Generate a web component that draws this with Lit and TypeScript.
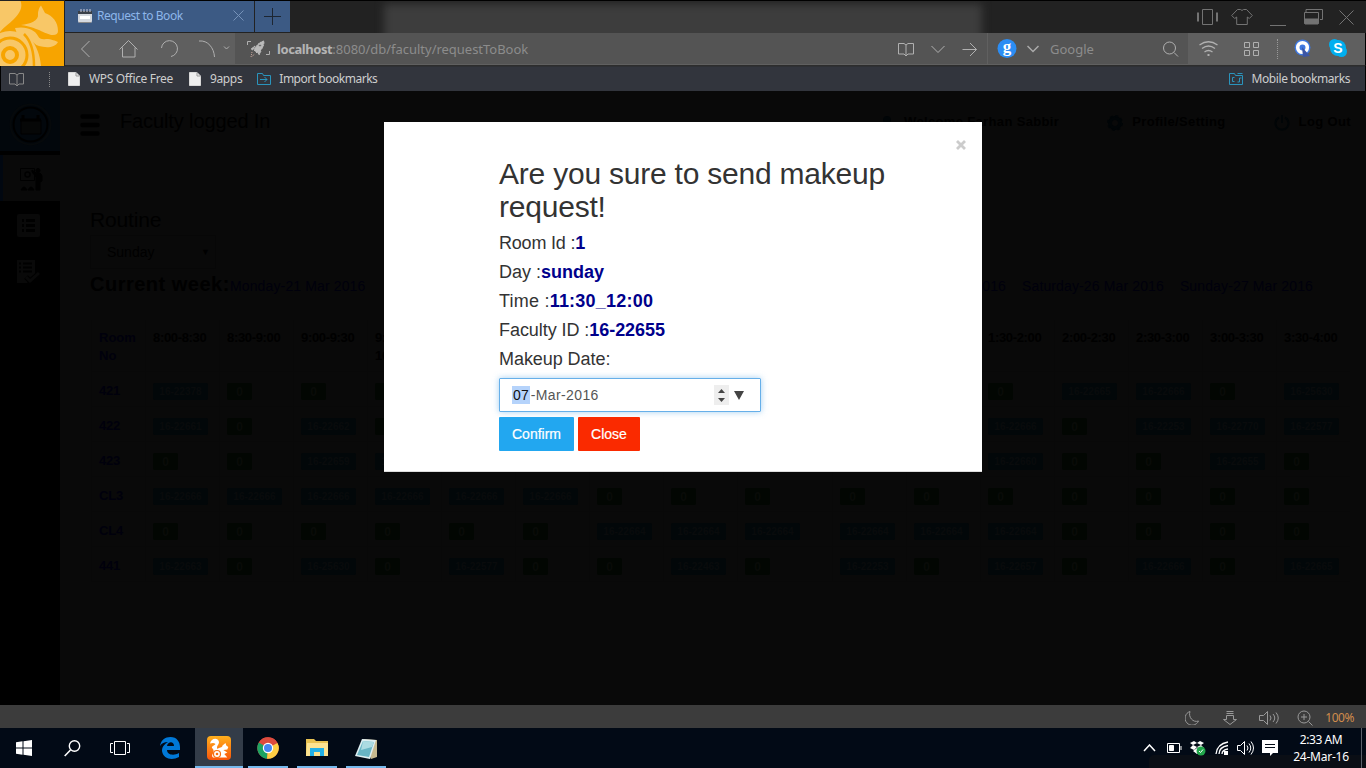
import { LitElement, html, css, svg } from "lit";
import { customElement } from "lit/decorators.js";

const icon = (w: number, h: number, body: unknown) =>
  html`<svg width=${w} height=${h} viewBox="0 0 ${w} ${h}" fill="none" stroke="currentColor" stroke-width="1">${body}</svg>`;

// Columns fully behind the dialog carry no heading.
const SLOTS = [
  "8:00-8:30", "8:30-9:00", "9:00-9:30", "9:30-10:00", "", "", "", "", "", "", "",
  "1:30-2:00", "2:00-2:30", "2:30-3:00", "3:00-3:30", "3:30-4:00",
];

const ROOMS: [string, string[]][] = [
  ["421", ["22378", "0", "0", "0", "", "", "", "", "", "", "", "0", "22665", "22666", "0", "25630"]],
  ["422", ["22661", "0", "22662", "0", "", "", "", "", "", "", "", "22666", "0", "22253", "22770", "22577"]],
  ["423", ["0", "0", "22659", "22659", "", "", "", "", "", "", "", "22660", "0", "0", "22655", "0"]],
  ["CL3", ["22666", "22666", "22666", "22666", "22666", "22666", "0", "0", "0", "0", "0", "0", "0", "0", "0", "0"]],
  ["CL4", ["0", "0", "0", "0", "0", "0", "22664", "22664", "22664", "22664", "22664", "22664", "0", "0", "0", "0"]],
  ["441", ["22663", "0", "25630", "0", "22577", "0", "0", "22463", "0", "22253", "0", "22657", "0", "22666", "0", "22665"]],
];

@customElement("browser-chrome")
class BrowserChrome extends LitElement {
  static styles = css`
    :host { display: block; height: 91px; background: #000; font: 12px/16px "Noto Sans", "Open Sans", sans-serif; }
    * { box-sizing: border-box; }
    svg { display: block; flex: none; }
    .top { display: flex; height: 66px; }
    .logo { width: 65px; height: 66px; padding-top: 1px; flex: none; background: #222; }
    .main { flex: 1; min-width: 0; }
    .tabs { height: 33px; display: flex; padding-top: 1px; background: #222; position: relative; overflow: hidden; }
    .tabs::before { content: ""; position: absolute; z-index: 1; left: 0; right: 0; top: 0; height: 1px; background: #000; }
    .haze { position: absolute; left: 319px; top: 4px; width: 598px; height: 60px; background: #3d3d3d; filter: blur(4px); }
    .tab { width: 189px; background: #3c5a84; color: #8db6ea; display: flex; align-items: center; height: 31px; padding: 0 10px 2px 13px; position: relative; }
    .tab .name { margin-left: 5px; flex: 1; white-space: nowrap; letter-spacing: -0.45px; }
    .tab .x { color: #7692b8; }
    .plus { width: 35px; height: 31px; margin-left: 1px; background: #3c5a84; color: #1d2632; display: grid; place-items: center; position: relative; }
    .win { margin-left: auto; display: flex; color: #737373; padding: 7px 12px 0 0; gap: 15px; position: relative; }
    .win svg:nth-child(2) { margin: 0 1px 0 -2px; }
    .win svg:nth-child(4) { margin-right: 1px; }
    .bar { height: 33px; display: flex; align-items: center; background: #5f5f5f; border-bottom: 1px solid #2d2d2d; border-right: 1px solid #000; color: #b0b0b0; }
    .nav { width: 170px; height: 32px; display: flex; align-items: center; padding-left: 15px; }
    .addr { width: 752px; height: 32px; background: #545454; display: flex; align-items: center; border-bottom: 1px solid #606060; padding-left: 11px; }
    .url { margin-left: 6px; font-size: 13px; color: #8c8c8c; letter-spacing: -0.02px; white-space: nowrap; flex: 1; }
    .url b { color: #b4b4b4; letter-spacing: -0.42px; }
    .acts { display: flex; align-items: center; gap: 17px; margin-right: 9px; }
    .search { width: 201px; height: 32px; background: #545454; border-left: 1px solid #606060; border-bottom: 1px solid #606060; display: flex; align-items: center; padding: 0 9px; }
    .search .drop { margin-left: 10px; }
    .search .q { flex: 1; margin-left: 11px; font-size: 13px; color: #8c8c8c; letter-spacing: 0; }
    .ext { display: flex; align-items: center; margin-left: 11px; }
    .dots { width: 1px; height: 20px; border-left: 1px dotted #999; }
    .marks { height: 25px; background: #32353d; margin: 0 1px; display: flex; align-items: center; color: #cdcdcd; white-space: nowrap; border-top: 1px solid #2e3034; padding: 0 15px 0 8px; }
    .marks .dots { height: 15px; margin: 0 18px 0 24px; border-color: #888; }
    .link { display: flex; align-items: center; gap: 9px; margin-right: 16px; letter-spacing: -0.34px; }
    .link.import { margin-left: -1px; gap: 8px; letter-spacing: -0.48px; }
    .link.mobile { margin: 0 0 0 auto; gap: 8px; letter-spacing: -0.4px; }
  `;

  render() {
    const page = icon(12, 14, svg`<path d="M.5.5h7.500l3.500 3.500v9.500h-11z" fill="#eee" stroke="#d8d8d8"/><path d="M8 .5v3.500h3.500" stroke="#999"/>`);
    return html`
      <div class="top">
        <div class="logo">
          <svg width="64" height="65" viewBox="0 0 64 65">
            <rect width="64" height="65" fill="#f7a400"/>
            <g fill="#f8c767">
              <circle cx="10" cy="54" r="24"/>
              <path d="M0 0H20.500C23 6 20 12 14 18C9 23 4 26 0 31Z"/>
              <path d="M41 4.500L45 12C53 15 58 21 58 30Q58 34 53 34C46 34 40 27 21 24C30 23 39 20 38 13Q38 8 41 4.500Z"/>
              <path d="M15 27C27 25 35 29 38 35Q40 39 46 38C52 38 55 40 58 41C55 47 46 47 39 45C35 44 33 41 31 38C37 46 40 54 41 65H28Z"/>
            </g>
            <path d="M24 33C32 41 34 52 34 65" fill="none" stroke="#f7a400" stroke-width="2.500"/>
            <circle cx="10" cy="54" r="17" fill="none" stroke="#f7a400" stroke-width="3"/>
            <circle cx="10" cy="54" r="7" fill="none" stroke="#f7a400" stroke-width="4"/>
          </svg>
        </div>
        <div class="main">
          <div class="tabs">
            <div class="haze"></div>
            <div class="tab">
              ${icon(14, 16, svg`<rect x="0" y="3" width="14" height="12" rx="2" fill="#d5d9df" stroke="none"/><path d="M0 6V3h14v3z" fill="#3a4048" stroke="none"/><path d="M3 1v3M6 1v3M9 1v3M12 1v3" stroke="#ccd"/><path d="M2 9.500h10" stroke="#fff" stroke-width="3"/><path d="M1 14.500h12" stroke="#888"/>`)}
              <span class="name">Request to Book</span>
              <span class="x">${icon(11, 11, svg`<path d="M.5.5l10 10M10.500.5l-10 10"/>`)}</span>
            </div>
            <div class="plus">${icon(17, 17, svg`<path d="M8.500 0v17M0 8.500h17"/>`)}</div>
            <div class="win">
              ${icon(21, 18, svg`<path d="M5.500 1.500h10v15h-10z"/><path d="M1 4.500v9M20 4.500v9" stroke-width="2"/>`)}
              ${icon(22, 18, svg`<path d="M6.500 1.500L.7 7.500l3 3 2-1.500v7.500h10.600V9l2 1.500 3-3-5.800-6h-3q-1.500 2-3 0z"/>`)}
              ${icon(19, 18, svg`<path d="M1 17.500h16"/>`)}
              ${icon(20, 18, svg`<path d="M3 4V1.500h16.500v10H17M1.500 4.500h14v11h-14z"/><path d="M2 11h13v5H2z" fill="currentColor"/>`)}
              ${icon(15, 18, svg`<path d="M.5 2.500l14 14M14.500 2.500l-14 14"/>`)}
            </div>
          </div>
          <div class="bar">
            <div class="nav">
              ${icon(38, 20, svg`<path d="M9.500 2l-8 8 8 8"/>`)}
              ${icon(42, 20, svg`<path d="M1.500 10.500L10.500 1.500l9 9M4.500 8.500v9.500h12.500V8.500"/>`)}
              ${icon(38, 20, svg`<path d="M1.500 9A8 8 0 1 1 11 17.500"/>`)}
              ${icon(25, 20, svg`<path d="M1 2C10 1 16 9 16.500 18"/>`)}
              ${icon(7, 10, svg`<path d="M1 2.500l2.500 2.500L6 2.500"/>`)}
            </div>
            <div class="addr">
              ${icon(25, 20, svg`<path d="M1.500 6V2.500H5M20 15.500h3.500V12"/><path d="M18 2C13 3 10 7 8 11l3 3c4-2 7-6 7-12zM9 7l-4 3 2 1zM15 12l-2 4-1-3z" fill="#bbb" stroke="#bbb" stroke-dasharray="2 .7"/><path d="M6 13l-1 5 4-3" stroke-dasharray="1 1" stroke="#c9a79d"/><circle cx="14" cy="6.500" r="1.200" fill="#555"/>`)}
              <span class="url"><b>localhost</b>:8080/db/faculty/requestToBook</span>
              <span class="acts">
                ${icon(16, 16, svg`<path d="M.5 2.500H6l2 1.500 2-1.500h5.500v10.500H10L8 15l-2-2H.5zM8 4v11"/>`)}
                ${icon(14, 16, svg`<path d="M.5 5l6.500 6.500L13.500 5"/>`)}
                ${icon(16, 16, svg`<path d="M.5 8.500h14M8 2l6.500 6.500L8 15"/>`)}
              </span>
            </div>
            <div class="search">
              <svg width="20" height="20" viewBox="0 0 20 20"><circle cx="10" cy="9.500" r="9.500" fill="#2b8df4"/><text x="10" y="13" font-family="Liberation Serif, serif" font-weight="bold" font-size="17" fill="#fff" text-anchor="middle">g</text></svg>
              <svg class="drop" width="12" height="8" viewBox="0 0 12 8"><path d="M.5 1l5.500 5.500L11.500 1" fill="none" stroke="#aaa" stroke-width="1.500"/></svg>
              <span class="q">Google</span>
              ${icon(16, 16, svg`<circle cx="6.500" cy="7" r="6"/><path d="M11 11.500l4 4"/>`)}
            </div>
            <div class="ext">
              ${icon(41, 18, svg`<path d="M.5 5q9-6.500 18 0M3 8.500q6.500-5 13 0M5.500 12q4-3 8 0" stroke-width="1.300"/><rect x="8.500" y="14" width="2" height="2" fill="currentColor" stroke="none"/>`)}
              ${icon(37, 16, svg`<path d="M4.500 1.500h5v5h-5zM13.500 1.500h5v5h-5zM4.500 9.500h5v5h-5zM13.500 9.500h5v5h-5z"/>`)}
              <span class="dots"></span>
              <svg width="51" height="20" viewBox="0 0 51 20"><circle cx="24.500" cy="8.500" r="8" fill="#3f78e0"/><circle cx="24.500" cy="8.500" r="4.800" fill="none" stroke="#fff" stroke-width="3.600"/><path d="M24 8l8 9-7 1z" fill="#3b55a5"/></svg>
              <svg width="18" height="20" viewBox="0 0 18 20"><circle cx="5.500" cy="5.500" r="5.500" fill="#00aff0"/><circle cx="12.500" cy="12.500" r="5.500" fill="#00aff0"/><circle cx="9" cy="9" r="8" fill="#00aff0"/><text x="9" y="14" text-anchor="middle" font-family="Liberation Sans, sans-serif" font-weight="bold" font-size="14" fill="#fff">S</text></svg>
            </div>
          </div>
        </div>
      </div>
      <div class="marks">
        ${icon(16, 16, svg`<path stroke="#888" d="M.5 2.500H6l2 1.500 2-1.500h4.500v10.500H10L8 15l-2-2H.5zM8 4v11"/>`)}
        <span class="dots"></span>
        <span class="link">${page}WPS Office Free</span>
        <span class="link">${page}9apps</span>
        <span class="link import">${icon(14, 12, svg`<path stroke="#2a94bd" d="M.5.500h5l1 2h7v9H.5zM3 6.500h7M7.500 4l2.500 2.500L7.500 9"/>`)}Import bookmarks</span>
        <span class="link mobile">${icon(14, 12, svg`<path stroke="#2a94bd" d="M.5.500h5l1 2h7v9H.5zM8.500.500h5M5.500 4.500h-2v4h2M8.500 9h2V5h2"/>`)}Mobile bookmarks</span>
      </div>`;
  }
}

@customElement("faculty-page")
class FacultyPage extends LitElement {
  static styles = css`
    :host { display: flex; height: 614px; background: #090909; }
    * { box-sizing: border-box; }
    svg { display: block; flex: none; }
    .side { width: 60px; background: #000; flex: none; }
    .badge { height: 60px; background: #02070c; padding: 12px 9px; margin-bottom: 4px; }
    .item { height: 46px; padding: 13px 17px; }
    .item.on { background: #090909; border-left: 3px solid #010710; }
    .body { flex: 1; padding-left: 30px; min-width: 0; }
    .head { height: 117px; display: flex; padding-top: 19px; margin-left: -10px; }
    .title { margin-left: 20px; font-size: 20px; line-height: 22px; letter-spacing: -0.12px; width: 759px; flex: none; white-space: nowrap; }
    .user { font-weight: bold; font-size: 13px; line-height: 23px; letter-spacing: 0.35px; display: flex; flex: none; white-space: nowrap; }
    .user svg { margin: 5px 9px 0 0; }
    .set { margin-left: 48px; }
    .out { margin-left: 48px; }
    .routine { font-size: 21px; line-height: 24px; height: 27px; letter-spacing: -0.15px; }
    .sel { width: 126px; height: 34px; border: 1px solid #070707; padding: 0 5px 0 16px; display: flex; justify-content: space-between; align-items: center; font-size: 14px; letter-spacing: 0; }
    .sel span:last-child { font-size: 9px; }
    .week { display: flex; align-items: baseline; height: 51px; padding-top: 6px; white-space: nowrap; color: #00000c; font-size: 14px; letter-spacing: 0.13px; }
    .week b { color: #000; font-size: 20px; letter-spacing: 0.5px; width: 140px; }
    .week .fri { margin-left: auto; margin-right: 16px; }
    .week .sat { margin-right: 16px; }
    .week .sun { margin-right: 53px; }
    .grid { display: grid; grid-template-columns: 54px repeat(8, 74px) 95px repeat(7, 74px); grid-template-rows: 52px; grid-auto-rows: 35px; width: 1259px; margin-left: 1px; font-weight: bold; }
    .grid > div { border-left: 1px solid #080808; border-bottom: 1px solid #080808; padding: 11px 0 0 7px; }
    .grid > .th { padding-top: 9px; padding-right: 8px; letter-spacing: -0.33px; }
    .grid > .room { color: #00000c; padding-top: 10px; letter-spacing: -0.2px; }
    .grid > .th.room { padding-top: 9px; letter-spacing: 0; }
    .tag { display: flex; justify-content: center; align-items: center; width: 55px; height: 17px; border-radius: 2px; background: #020709; color: #090b0c; font-size: 10px; }
    .tag.free { width: 25px; background: #020602; color: #090b08; font-size: 12px; }
  `;
  render() {
    return html`
      <div class="side">
        <div class="badge">${icon(43, 43, svg`<circle cx="21.500" cy="21.500" r="20" stroke="#06090b" stroke-width="2"/><circle cx="21.500" cy="21.500" r="17" stroke="#000" stroke-width="2"/><path d="M12 17h20v14H12z" fill="#060707" stroke="#000"/><path d="M11 17h21M14 12v6M29 12v6" stroke="#000" stroke-width="3"/>`)}</div>
        <div class="item on">${icon(23, 23, svg`<path stroke="#000" d="M.5.500h14v12H.5z"/><circle cx="7.500" cy="6.500" r="2.500" stroke="#000" stroke-width="1.500"/><path fill="#000" d="M12 2l4 3q5-1 6 3v5l-2 1v8h-4V9l-4-5zM1 22q3-6 6 0zM8 22q3-6 6 0z"/><circle cx="18" cy="2.500" r="2" fill="#000"/>`)}</div>
        <div class="item">${icon(23, 23, svg`<rect width="23" height="23" rx="2" fill="#090909" stroke="none"/><path d="M9 6.500h9M9 11.500h9M9 16.500h9M5 6.500h2M5 11.500h2M5 16.500h2" stroke="#000" stroke-width="3"/>`)}</div>
        <div class="item">${icon(23, 23, svg`<path d="M0 0h18v15l-8 8H0z" fill="#090909" stroke="none"/><path d="M6 3.500h9M6 7.500h9M6 11.500h9M2 3.500h2M2 7.500h2M2 11.500h2" stroke="#000" stroke-width="2"/><path d="M9 17l4 4 9-8" stroke="#000" stroke-width="5"/><path d="M9 17l4 4 9-8" stroke="#090909" stroke-width="3"/>`)}</div>
      </div>
      <div class="body">
        <div class="head">
          ${icon(20, 26, svg`<path d="M2.500 6.500h15M2.500 15h15M2.500 23.500h15" stroke="#000" stroke-width="4.500" stroke-linecap="round"/>`)}
          <div class="title">Faculty logged In</div>
          <div class="user"><svg width="16" height="16"><circle cx="8" cy="5" r="4" fill="#010507"/></svg>Welcome Farhan Sabbir</div>
          <div class="user set"><svg width="16" height="16"><circle cx="8" cy="8" r="5" fill="none" stroke="#010507" stroke-width="4"/><circle cx="8" cy="8" r="7" fill="none" stroke="#010507" stroke-width="2" stroke-dasharray="3 2.500"/></svg>Profile/Setting</div>
          <div class="user out"><svg width="16" height="16"><path d="M5 2.500a6.500 6.500 0 1 0 6 0M8 0v8" fill="none" stroke="#010507" stroke-width="2"/></svg>Log Out</div>
        </div>
        <div class="routine">Routine</div>
        <div class="sel"><span>Sunday</span><span>▼</span></div>
        <div class="week"><b>Current week:</b><span>Monday-21 Mar 2016</span><span class="fri">Friday-25 Mar 2016</span><span class="sat">Saturday-26 Mar 2016</span><span class="sun">Sunday-27 Mar 2016</span></div>
        <div class="grid">
          <div class="th room">Room No</div>
          ${SLOTS.map((s) => html`<div class="th">${s}</div>`)}
          ${ROOMS.map(([room, cells]) => html`<div class="room">${room}</div>${cells.map((c) => html`<div>${c === "" ? "" : c === "0" ? html`<span class="tag free">0</span>` : html`<span class="tag">16-${c}</span>`}</div>`)}`)}
        </div>
      </div>`;
  }
}

@customElement("confirm-modal")
class ConfirmModal extends LitElement {
  static styles = css`
    :host { position: absolute; left: 384px; top: 122px; width: 598px; height: 350px; box-sizing: border-box; background: #fff; padding: 35px 80px 0 115px; color: #333; border-bottom: 1px solid #ddd; }
    .x { position: absolute; right: 16px; top: 18px; }
    h2 { font-size: 30px; line-height: 33px; font-weight: normal; margin: 0 0 10px; letter-spacing: -0.22px; }
    p { font-size: 18px; line-height: 20px; margin: 0 0 9px; white-space: nowrap; }
    p b { color: #00008b; }
    .room { letter-spacing: -0.2px; }
    .time { letter-spacing: 0.22px; }
    .faculty, .label { letter-spacing: -0.06px; }
    .date { width: 262px; height: 34px; box-sizing: border-box; border: 1px solid #66afe9; box-shadow: 0 0 6px rgba(102, 175, 233, 0.6); border-radius: 1px; display: flex; align-items: center; padding-left: 12px; font-size: 14px; color: #555; }
    .date mark { background: #b5d3fb; color: #111; line-height: 18px; padding: 1px 1px; letter-spacing: 0.1px; margin-right: 1px; }
    .date .val { flex: 1; letter-spacing: 0.38px; }
    .date svg { margin-right: 16px; }
    .btns { display: flex; gap: 4px; margin-top: 5px; }
    .btn { height: 34px; width: 75px; background: #22a7f0; color: #fff; font-size: 14px; line-height: 34px; text-align: center; border-radius: 1px; -webkit-text-stroke: 0.2px #fff; }
    .btn.close { width: 62px; background: #fa2a00; }
  `;
  render() {
    return html`
      <svg class="x" width="10" height="10" viewBox="0 0 10 10"><path d="M1 1l8 8M9 1L1 9" stroke="#ccc" stroke-width="2.800"/></svg>
      <h2>Are you sure to send makeup request!</h2>
      <p class="room">Room Id :<b>1</b></p>
      <p>Day :<b>sunday</b></p>
      <p class="time">Time :<b>11:30_12:00</b></p>
      <p class="faculty">Faculty ID :<b>16-22655</b></p>
      <p class="label">Makeup Date:</p>
      <div class="date">
        <span class="val"><mark>07</mark>-Mar-2016</span>
        <svg width="30" height="20" viewBox="0 0 30 20"><path fill="#eee" d="M0 0h15v20H0z"/><path fill="#444" d="M4 8h7L7.500 4zM4 13h7l-3.500 4zM20 6h10l-5 9z"/></svg>
      </div>
      <div class="btns"><div class="btn">Confirm</div><div class="btn close">Close</div></div>`;
  }
}

@customElement("desktop-bars")
class DesktopBars extends LitElement {
  static styles = css`
    :host { display: block; height: 63px; font: 12px/17px "Noto Sans", "Open Sans", sans-serif; }
    * { box-sizing: border-box; }
    svg { display: block; flex: none; }
    .status { height: 23px; background: #3c3c3c; display: flex; align-items: center; justify-content: flex-end; gap: 20px; padding: 2px 12px 0 0; color: #999; }
    .status svg:first-child { margin-right: 4px; }
    .status svg:nth-child(2) { margin-right: 2px; }
    .zoom { color: #d18c4c; margin-left: -8px; letter-spacing: -0.45px; }
    .status svg:nth-child(3) { margin-right: -2px; }
    .task { height: 40px; background: #020a16; display: flex; position: relative; overflow: hidden; }
    .app { width: 48px; height: 40px; display: grid; place-items: center; color: #fff; flex: none; }
    .app:nth-child(5) { width: 51px; padding-left: 1px; }
    .app.run { border-bottom: 2px solid #76b9ed; width: 40px; margin: 0 5px 0 4px; padding-top: 2px; }
    .app.run.active { background: #333c48; width: 48px; margin: 0; padding-left: 0; }
    .app.run.active + .run { margin-left: 5px; }
    .tray { margin-left: auto; display: flex; align-items: center; color: #fff; gap: 8px; padding-right: 11px; position: relative; }
    .tray svg:first-child { margin-right: 3px; }
    .clock { width: 58px; letter-spacing: -0.42px; margin-left: 6px; white-space: nowrap; display: flex; flex-direction: column; align-items: center; }
    .clock span:last-child { letter-spacing: -0.25px; }
    .edge { width: 1px; height: 40px; background: #5b616b; margin-right: 4px; position: relative; }
    .plate { position: absolute; left: 1149px; top: 27px; width: 217px; height: 20px; border-radius: 5px 0 0 0; background: #0a0e15; }
  `;
  render() {
    return html`
      <div class="status">
        ${icon(14, 14, svg`<path d="M5 .5A7 7 0 1 0 13.500 10C8 12 3 6 5 .5z"/>`)}
        ${icon(14, 14, svg`<path d="M3.500.5h7M3.500 2.500h7M3.500 4.500h7v4h3L7 13.500.5 8.500h3z"/>`)}
        ${icon(20, 14, svg`<path d="M.5 4.500h4l4-4v13l-4-4h-4zM11 4.500q2 2.500 0 5M14 3q3.500 4 0 8M17 1.500q4.500 5.500 0 11"/>`)}
        ${icon(16, 16, svg`<circle cx="7" cy="7" r="6"/><path d="M7 4v6M4 7h6M11.500 11.500l4 4"/>`)}
        <span class="zoom">100%</span>
      </div>
      <div class="task">
        <div class="plate"></div>
        <div class="app">${icon(16, 16, svg`<path fill="#fff" stroke="none" d="M0 2.300l6.500-1v6.200H0zM7.500 1.200L16 0v7.500H7.500zM0 8.500h6.500v6.200L0 13.700zM7.500 8.500H16V16l-8.500-1.200z"/>`)}</div>
        <div class="app">${icon(17, 17, svg`<circle cx="10.500" cy="6" r="5.200" stroke-width="1.400"/><path d="M6.500 10L.7 16" stroke-width="1.600"/>`)}</div>
        <div class="app">${icon(20, 14, svg`<path d="M4.500.5h11v13h-11zM3 2.500H.5v9H3M17 2.500h2.500v9H17"/>`)}</div>
        <div class="app">${icon(20, 22, svg`<path fill="#0078d7" stroke="none" d="M0 9C1 3 5 0 10.500 0C17 0 20 5 20 10v3H7c0 5 7 6 12 3v4C12 24 3 22 2 14C2 9 5 7 8 5C4 5 2 6 0 9zM7 9h7c0-5-6-5-7 0z"/>`)}</div>
        <div class="app run active">
          <svg width="24" height="24" viewBox="0 0 24 24"><defs><linearGradient id="o" y2="1" x2="0"><stop stop-color="#ffb01d"/><stop offset="1" stop-color="#f9550b"/></linearGradient></defs><rect width="24" height="24" rx="4" fill="url(#o)"/><path d="M3 7.500C4 2 11 1 12 6C12 9 9 10 10.500 13C12 11 15.500 12 15.500 9.500L18.500 7l.8 2.500 2 1.500-1 2.500-4 .5 4 2.500-3 1.500 3 3.500H6C3 19 9 16 5.500 12.500C3.500 10.500 7 10 8.500 8C7 6.500 5 7 3 7.500z" fill="#fff"/><circle cx="10" cy="18" r="3.500" fill="none" stroke="#f87013" stroke-width="1.200"/><circle cx="10" cy="18" r="1.300" fill="#f87013"/></svg>
        </div>
        <div class="app run">
          <svg width="22" height="22" viewBox="0 0 22 22"><circle cx="11" cy="11" r="10.700" fill="#dd4b3e"/><path d="M11 11L1.800 5.500A10.700 10.700 0 0 0 10 21.700z" fill="#1da362"/><path d="M11 11l9.500-5a10.700 10.700 0 0 1-10.500 15.700z" fill="#ffce44"/><path d="M1.800 5.500A10.700 10.700 0 0 1 20.500 6H11z" fill="#dd4b3e"/><circle cx="11" cy="11" r="5.200" fill="#fff"/><circle cx="11" cy="11" r="4" fill="#4587f3"/></svg>
        </div>
        <div class="app run">
          <svg width="22" height="20" viewBox="0 0 22 20"><path d="M0 1h8l2 2h12v15H0z" fill="#e8c252"/><path d="M1 5h21v13H0z" fill="#fce391"/><path d="M4 18v-8h14v8h-4v-4H8v4z" fill="#22b0e6"/></svg>
        </div>
        <div class="app run">
          <svg width="23" height="23" viewBox="0 0 23 23"><path d="M8 2l14 1v17l-6 2z" fill="#c7b98f"/><path d="M7 2l14 1-6 19L0 19z" fill="#dfeff2"/><path d="M8 4l11 1-5 15-12-2z" fill="#68b5c5"/><path d="M8 4l11 1-2 5-11 3z" fill="#acdbe2"/></svg>
        </div>
        <div class="tray">
          ${icon(13, 8, svg`<path d="M1 7l5.500-6L12 7" stroke-width="1.500"/>`)}
          ${icon(15, 10, svg`<path d="M.5.500h12v9H.5zM14 3v4"/><path d="M2.500 2.500h4v5h-4z" fill="#fff"/>`)}
          ${icon(17, 15, svg`<path fill="#fff" stroke="none" d="M4 0l3 2-4 2-3-2zM10 0l4 2-3 2-4-2zM3 4l4 2-3 3-4-2zM11 4l3 3-4 2-3-3zM7 7l4 3-4 3-4-3z"/><circle cx="11" cy="10" r="4.500" fill="#21a64a" stroke="none"/><path d="M9 10l1.500 1.500L13 8.500" stroke="#fff"/>`)}
          ${icon(14, 14, svg`<path d="M1 13Q2 3 13 1M4 13Q4 6 13 4.500M7 13Q7 9 13 8" stroke-width="1.300"/><rect x="9" y="10" width="4" height="4" fill="#fff" stroke="none"/>`)}
          ${icon(17, 14, svg`<path d="M.5 4.500h3l4-4v13l-4-4h-3zM10 4.500q2 2.500 0 5M12 2.500q3.500 4.500 0 9M14 .5q5 6.500 0 13"/>`)}
          ${icon(16, 16, svg`<path fill="#fff" stroke="none" d="M0 0h16v13h-5l-3 3v-3H0z"/><path d="M3 4.500h10M3 7.500h10" stroke="#020a16"/>`)}
          <div class="clock"><span>2:33 AM</span><span>24-Mar-16</span></div>
        </div>
        <div class="edge"></div>
      </div>`;
  }
}

@customElement("app-root")
class AppRoot extends LitElement {
  static styles = css`
    :host { display: block; width: 1366px; height: 768px; overflow: hidden; background: #090909; position: relative; font: 13px/18px "Liberation Sans", Arial, sans-serif; color: #000; }
  `;
  render() {
    return html`<browser-chrome></browser-chrome><faculty-page></faculty-page><desktop-bars></desktop-bars><confirm-modal></confirm-modal>`;
  }
}
